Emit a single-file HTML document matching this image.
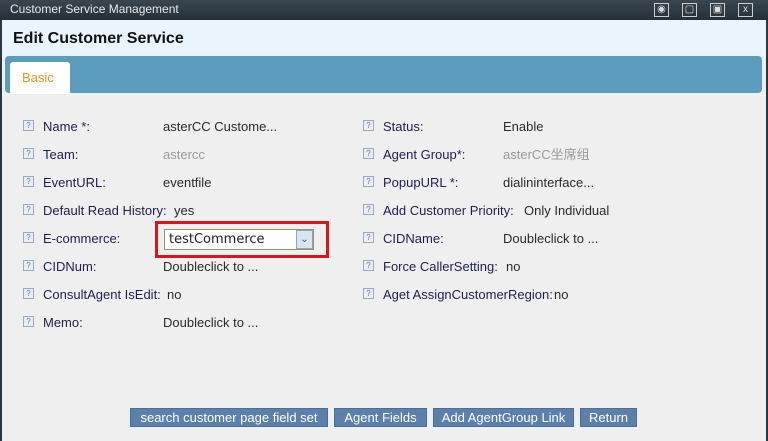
<!DOCTYPE html>
<html><head><style>
*{margin:0;padding:0;box-sizing:border-box}
body{width:768px;height:441px;overflow:hidden;background:#2c3640;font-family:"Liberation Sans",sans-serif;position:relative}
.title{position:absolute;left:0;top:0;width:768px;height:20px;background:linear-gradient(#3a4650,#262f37);color:#e8e8e8;font-size:12px;line-height:19px;padding-left:10px}
.tb{position:absolute;top:3px;width:15px;height:14px;border:1px solid #ccc;color:#ddd;font-size:10px;text-align:center;line-height:12px}
.win{position:absolute;left:2px;top:20px;width:764px;height:421px;background:#efefef}
.hdr{position:absolute;left:0;top:0;width:764px;height:37px;background:#eaf4fd;font-size:16px;font-weight:bold;color:#111;padding:10px 0 0 11px}
.tabbar{position:absolute;left:3px;top:36px;width:757px;height:37px;background:#5b9bbb;border-radius:4px}
.tab{position:absolute;left:5px;top:6px;width:60px;height:32px;background:#fff;border-radius:3px 3px 0 0;color:#e09a2a;font-size:13px;padding:8px 0 0 12px}
.r{position:absolute;font-size:13px;color:#1e1e50;height:15px;line-height:15px;white-space:nowrap}
.i{position:absolute;width:11px;height:11px;border:1px solid #9ab;background:#e8eef4;font-size:8px;color:#679;text-align:center;line-height:9px}
.v{color:#2a2a2a}
.btn{position:absolute;top:388px;height:19px;background:#5b80ab;border:1px solid #4a6e98;color:#fff;font-size:13px;text-align:center;line-height:17px}
</style></head><body>
<div class="title">Customer Service Management</div>
<div class="tb" style="left:654px">◉</div>
<div class="tb" style="left:682px">▢</div>
<div class="tb" style="left:710px">▣</div>
<div class="tb" style="left:738px">x</div>
<div class="win">
<div class="hdr">Edit Customer Service</div>
<div class="tabbar"><div class="tab">Basic</div></div>
</div>
<div id="f"></div>
<script>
var L=[["Name *:","asterCC Custome...",""],["Team:","astercc","#999"],["EventURL:","eventfile",""],["Default Read History:","yes","",174],["E-commerce:","",""],["CIDNum:","Doubleclick to ...",""],["ConsultAgent IsEdit:","no","",167],["Memo:","Doubleclick to ...",""]];
var R=[["Status:","Enable"],["Agent Group*:","asterCC坐席组","#999"],["PopupURL *:","dialininterface..."],["Add Customer Priority:","Only Individual","",524],["CIDName:","Doubleclick to ..."],["Force CallerSetting:","no","",506],["Aget AssignCustomerRegion:","no","",554]];
var h="";
function row(a,y,ix,lx,vx){h+='<div class="i" style="left:'+ix+'px;top:'+(y-6)+'px">?</div><div class="r" style="left:'+lx+'px;top:'+(y-7)+'px">'+a[0]+'</div>';if(a[1])h+='<div class="r v" style="left:'+(a[3]||vx)+'px;top:'+(y-7)+'px;'+(a[2]?'color:'+a[2]:'')+'">'+a[1]+'</div>';}
L.forEach(function(a,k){row(a,126+28*k,23,43,163)});
R.forEach(function(a,k){row(a,126+28*k,363,383,503)});
document.getElementById("f").innerHTML=h;
</script>
<div style="position:absolute;left:155px;top:221px;width:174px;height:37px;border:3px solid #d9141b"></div>
<div style="position:absolute;left:164px;top:229px;width:150px;height:21px;border:1px solid #8a9a6a;background:#fff;font-size:13px;color:#222;padding:2px 0 0 4px;font-family:'DejaVu Sans',sans-serif">testCommerce</div>
<div style="position:absolute;left:296px;top:230px;width:17px;height:19px;background:#d8e4f0;border:1px solid #8ab;color:#35a;font-size:10px;text-align:center;line-height:17px">⌄</div>
<div class="btn" style="left:130px;top:408px;width:198px">search customer page field set</div>
<div class="btn" style="left:334px;top:408px;width:93px">Agent Fields</div>
<div class="btn" style="left:433px;top:408px;width:141px">Add AgentGroup Link</div>
<div class="btn" style="left:580px;top:408px;width:57px">Return</div>
</body></html>
